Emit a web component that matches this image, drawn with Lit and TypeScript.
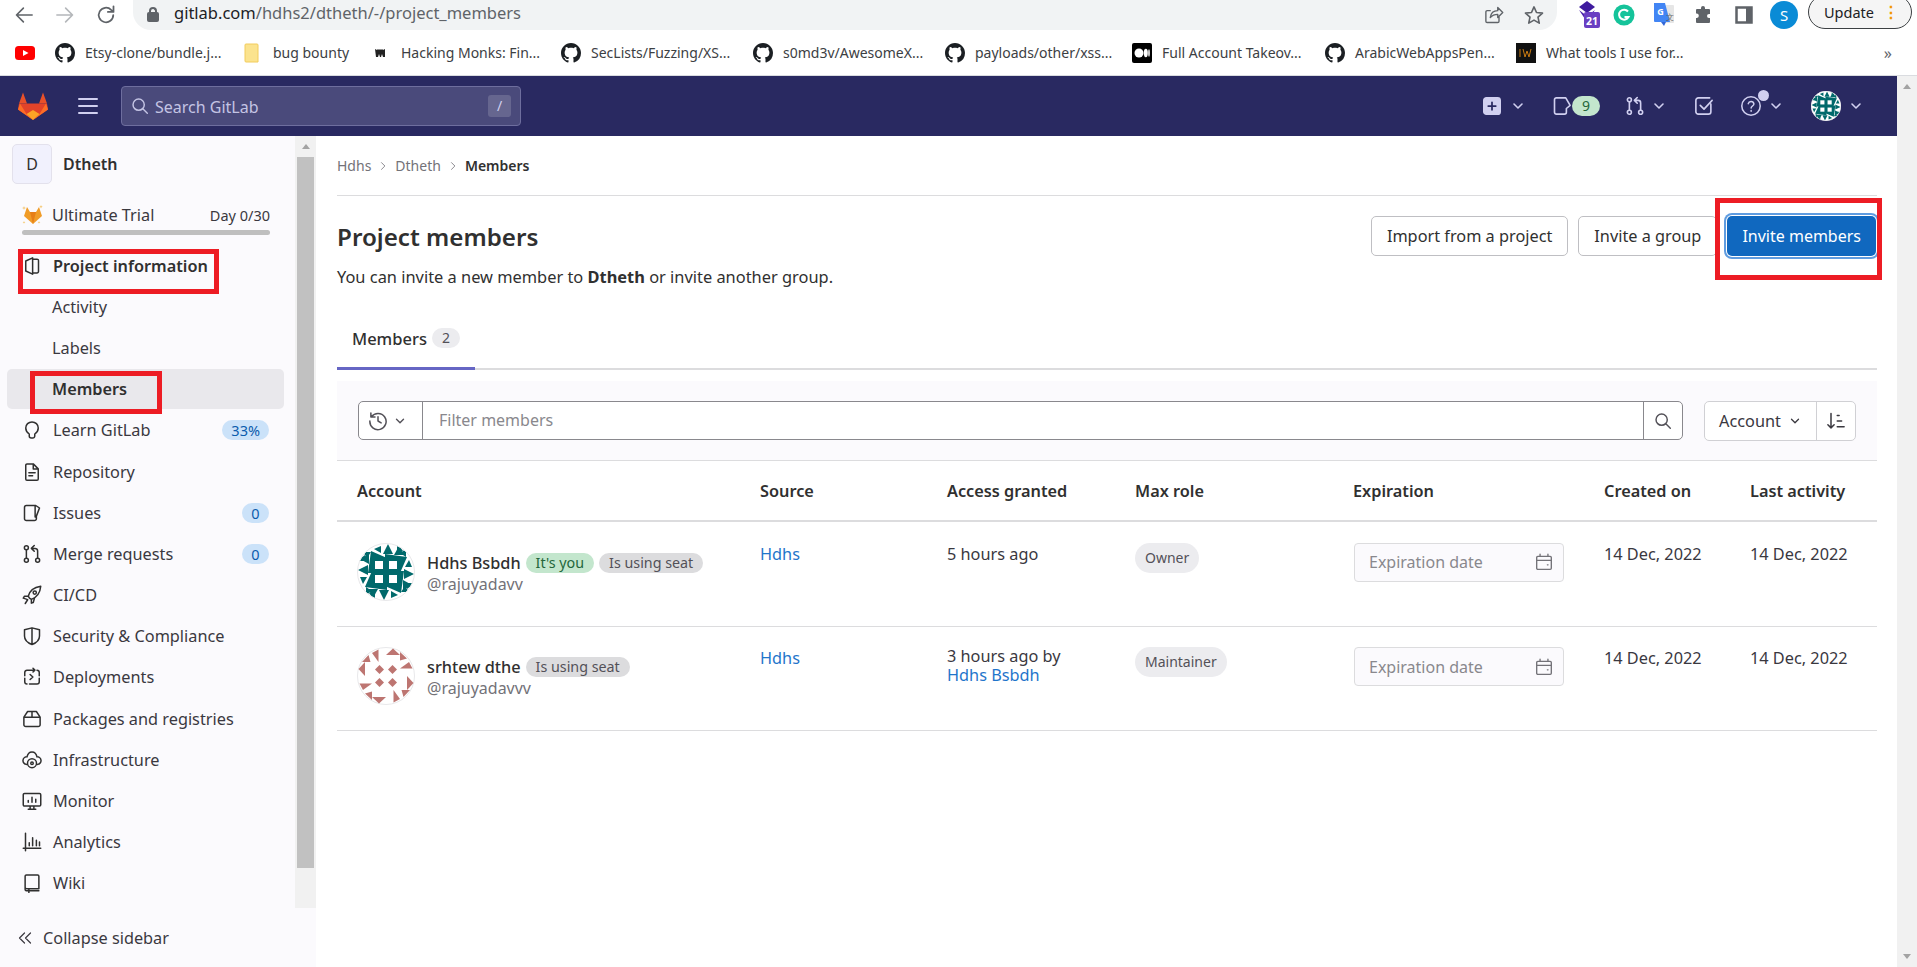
import { LitElement, html, svg, css } from 'lit';
import { customElement } from 'lit/decorators.js';

const GITHUB = 'M8 0C3.58 0 0 3.58 0 8c0 3.54 2.29 6.53 5.47 7.59.4.07.55-.17.55-.38 0-.19-.01-.82-.01-1.49-2.01.37-2.53-.49-2.69-.94-.09-.23-.48-.94-.82-1.13-.28-.15-.68-.52-.01-.53.63-.01 1.08.58 1.23.82.72 1.21 1.87.87 2.33.66.07-.52.28-.87.51-1.07-1.78-.2-3.64-.89-3.64-3.95 0-.87.31-1.59.82-2.15-.08-.2-.36-1.02.08-2.12 0 0 .67-.21 2.2.82.64-.18 1.32-.27 2-.27.68 0 1.36.09 2 .27 1.53-1.04 2.2-.82 2.2-.82.44 1.1.16 1.92.08 2.12.51.56.82 1.27.82 2.15 0 3.07-1.87 3.75-3.65 3.95.29.25.54.73.54 1.48 0 1.07-.01 1.93-.01 2.2 0 .21.15.46.55.38A8.013 8.013 0 0016 8c0-4.42-3.58-8-8-8z';

// stroked glyphs on a 16 box, roughly the GitLab svg set
const ICONS: Record<string, ReturnType<typeof svg>> = {
  project: svg`<path d="M3 4l5.5-2.5v13L3 12zM8.5 2.5H12a1.2 1.2 0 011.2 1.2v8.6a1.2 1.2 0 01-1.2 1.2H8.5"/>`,
  bulb: svg`<path d="M5.8 11.2C4 10 3 8.4 3 6.4 3 3.6 5.2 1.5 8 1.5s5 2.1 5 4.9c0 2-1 3.6-2.8 4.8v1.6a1.6 1.6 0 01-1.6 1.6H7.4a1.6 1.6 0 01-1.6-1.6z"/>`,
  doc: svg`<path d="M3 2.5a1 1 0 011-1h5l4 4v8a1 1 0 01-1 1H4a1 1 0 01-1-1zM9 1.5v4h4M5.5 8.5h5M5.5 11h3"/>`,
  issues: svg`<path d="M3.5 2h7.5l3 2-2.5 6.5v2a1.5 1.5 0 01-1.5 1.5H3.5A1.5 1.5 0 012 12.5v-9A1.5 1.5 0 013.5 2zM10.5 2.2v9"/>`,
  merge: svg`<circle cx="3.5" cy="3" r="1.6"/><circle cx="3.5" cy="13" r="1.6"/><circle cx="12.5" cy="13" r="1.6"/><path d="M3.5 4.6v6.8M12.5 11.4V5.5a2 2 0 00-2-2H8M9.8 1.2L7.5 3.5l2.3 2.3"/>`,
  rocket: svg`<path d="M6 10.5l-1-1.5C6 5 9.5 1.8 15 1c-.5 5.5-3.6 9-7.5 10.5zM5 9H2l-1 1.5 3 1M7.5 11.5v3L9 14l1-3.5M4.5 11.8L2.6 14.8"/><circle cx="10.2" cy="6" r="1.3"/>`,
  shield: svg`<path d="M8 1.5l6 1.5v5c0 3-2.5 5.5-6 6.8C4.5 13.5 2 11 2 8V3zM8 1.5v13.3"/>`,
  deploy: svg`<path d="M10 2.5H4A1.8 1.8 0 002.2 4.3V7M6 13.5h6a1.8 1.8 0 001.8-1.8V9M2.2 9v2.7A1.8 1.8 0 004 13.5M13.8 7V4.3A1.8 1.8 0 0012 2.5M8.8 1l1.5 1.5L8.8 4M6.5 6l2.2 2-2.2 2"/>`,
  box: svg`<path d="M4.5 2h7l3 4.5v6a1.5 1.5 0 01-1.5 1.5H3a1.5 1.5 0 01-1.5-1.5v-6zM1.5 6.5h13M8 2v4.5"/>`,
  infra: svg`<path d="M4 11.5H3.5A3 3 0 01.8 8.2 3 3 0 014 5.5C4.5 3 6 1.5 8 1.5s3.5 1.5 4 4a3 3 0 013.2 2.7 3 3 0 01-2.7 3.3H12"/><circle cx="8" cy="10.5" r="3.6"/><circle cx="8" cy="10.5" r="1"/>`,
  monitor: svg`<path d="M2 2h12a1 1 0 011 1v8a1 1 0 01-1 1H2a1 1 0 01-1-1V3a1 1 0 011-1zM5 14.5h6M6.5 12v2.5M9.5 12v2.5M5 9V7.5M8 9V5M11 9V6.5"/>`,
  analytics: svg`<path d="M2.8 1v14M1 13h14M5.8 11V8.5M8.5 11V4.5M11.5 11V6.5M14 11V8"/>`,
  wiki: svg`<path d="M3.5 1.5h9a1 1 0 011 1v10h-10A1.3 1.3 0 012.5 11.5V2.5a1 1 0 011-1zM2.5 11.5v1.7a1 1 0 001 1h10M5.5 13v2.5"/>`,
  chevrons: svg`<path d="M7.5 3L2.5 8l5 5M13.5 3l-5 5 5 5"/>`,
  chev: svg`<path d="M4 6l4 4 4-4"/>`,
  crumb: svg`<path d="M6 3.5L10.5 8 6 12.5"/>`,
  search: svg`<circle cx="6.8" cy="6.8" r="5"/><path d="M10.5 10.5l4 4"/>`,
  history: svg`<path d="M2.8 4.5A6.5 6.5 0 111.5 8M2.3 1.5v3.3h3.3M8 4.5V8l2.5 1.5"/>`,
  sort: svg`<path d="M4 2v11.5M1.5 11L4 13.5 6.5 11M9 3.5h1.5M9 8h3.5M9 12.5h5.5"/>`,
  calendar: svg`<path d="M2.5 3h11a1 1 0 011 1v9.5a1 1 0 01-1 1h-11a1 1 0 01-1-1V4a1 1 0 011-1zM1.5 6.5h13M4.5 1v2M11.5 1v2M11 10.5h.6"/>`,
  back: svg`<path d="M14.5 8H2M7.5 2.5L2 8l5.5 5.5"/>`,
  fwd: svg`<path d="M1.5 8H14M8.5 2.5L14 8l-5.5 5.5"/>`,
  reload: svg`<path d="M13.8 8a5.8 5.8 0 11-1.7-4.1L14 5.5M14 1v4.5H9.5"/>`,
  share: svg`<path d="M12 9.5V13a1 1 0 01-1 1H2.5a1 1 0 01-1-1V5.5a1 1 0 011-1H5M5 10c.5-3.5 3-5.5 6-5.5V2l4 4-4 4V7.5c-2.5 0-4.5.8-6 2.5z"/>`,
  star: svg`<path d="M8 1.5l2 4.5 4.8.5-3.6 3.2 1 4.8L8 12.1l-4.2 2.4 1-4.8L1.2 6.5 6 6z"/>`,
  plusBox: svg`<rect x="1.5" y="1.5" width="13" height="13" rx="2" fill="currentColor"/><path d="M8 5v6M5 8h6" stroke="#292961"/>`,
  todo: svg`<path d="M13.5 6.5v6a2 2 0 01-2 2h-8a2 2 0 01-2-2v-9a2 2 0 012-2h9M5 7.5L8 10.5l6.5-7"/>`,
  help: svg`<circle cx="8" cy="8" r="6.7"/><path d="M6 6.3A2.1 2.1 0 0110.1 6.5c0 1.4-2 1.6-2 3M8.1 11.3v.6"/>`,
  issueOutline: svg`<path d="M3.5 1.5h7.5l3.5 6-3 2.5v3a1.5 1.5 0 01-1.5 1.5H3.5A1.5 1.5 0 012 13V3a1.5 1.5 0 011.5-1.5z"/>`,
};

const icon = (name: string, size = 20, width = 1.4) => html`<svg class="ic" width=${size} height=${size} viewBox="0 0 16 16" fill="none" stroke="currentColor" stroke-width=${width} stroke-linecap="round" stroke-linejoin="round">${ICONS[name]}</svg>`;

const rot = [0, 90, 180, 270];

const tealAvatar = (size: number) => html`<svg class="avatar" width=${size} height=${size} viewBox="0 0 58 58">
  <defs><clipPath id="c${size}"><circle cx="29" cy="29" r="28.5"/></clipPath></defs>
  <circle cx="29" cy="29" r="29" fill="#fff"/>
  <g clip-path="url(#c${size})" fill="#00696b">
    ${rot.map(r => svg`<g transform="rotate(${r} 29 29)">
      <polygon points="14,8 30,15 30,30 11,30"/>
      <polygon points="24,3 24,10 17,6"/>
      <polygon points="31,1 26,11 36,11"/>
      <polygon points="37,12 42,3 47,12"/>
      <polygon points="6,9 14,9 10,15"/>
      <polygon points="0,18 8,18 8,12"/>
      <rect x="18" y="18" width="8" height="8" fill="#fff"/>
    </g>`)}
  </g>
  <circle cx="29" cy="29" r="28.5" fill="none" stroke="#e8e8ea"/>
</svg>`;

const roseAvatar = (size: number) => html`<svg class="avatar" width=${size} height=${size} viewBox="0 0 58 58">
  <circle cx="29" cy="29" r="29" fill="#fff"/>
  <circle cx="29" cy="29" r="28.5" fill="none" stroke="#e8e8ea"/>
  ${rot.map(r => svg`<g transform="rotate(${r} 29 29)" fill="#bd7571">
    <polygon points="5,15 11.5,8 13.5,15"/>
    <polygon points="15,6 21.5,2.5 21.5,15"/>
    <polygon points="1.5,22 8,15 8,29"/>
    <polygon points="22.5,18 27,22.5 22.5,27 18,22.5"/>
  </g>`)}
</svg>`;

const tanuki = html`<svg width="32" height="32" viewBox="0 0 32 32">
  <polygon points="6,2.5 10,13.5 2,13.5" fill="#e8502a"/>
  <polygon points="26,2.5 22,13.5 30,13.5" fill="#e8502a"/>
  <polygon points="2,13.5 30,13.5 31,19.5 16,30 1,19.5" fill="#e24329"/>
  <polygon points="1,19.5 3,13.5 9.5,24 16,30" fill="#fc6d26"/>
  <polygon points="31,19.5 29,13.5 22.5,24 16,30" fill="#fc6d26"/>
  <polygon points="9.5,24 16,20 22.5,24 16,30" fill="#fca326"/>
</svg>`;

const trialTanuki = html`<svg width="22" height="22" viewBox="0 0 22 22">
  <polygon points="5,3 8,8 14,8 17,3 20,12 11,20 2,12" fill="#f09c28"/>
  <polygon points="8,8 14,8 11,20" fill="#e67e17"/>
  <path d="M2 2l.5 1.5L4 4l-1.5.5L2 6l-.5-1.500L0 4l1.500-.5zM19 1l.5 1.200 1.200.5-1.200.5-.5 1.300-.5-1.300-1.200-.5 1.200-.5zM2 17l.4 1 1 .4-1 .4-.4 1-.4-1-1-.4 1-.4zM17 17l.4 1 1 .4-1 .4-.4 1-.4-1-1-.4 1-.4z" fill="#f4c468"/>
</svg>`;

interface Mark { type: string; text: string; width: number }

const BOOKMARKS: Mark[] = [
  { type: 'yt', text: '', width: 0 },
  { type: 'gh', text: 'Etsy-clone/bundle.j...', width: 138 },
  { type: 'folder', text: 'bug bounty', width: 78 },
  { type: 'hm', text: 'Hacking Monks: Fin...', width: 140 },
  { type: 'gh', text: 'SecLists/Fuzzing/XS...', width: 142 },
  { type: 'gh', text: 's0md3v/AwesomeX...', width: 142 },
  { type: 'gh', text: 'payloads/other/xss...', width: 137 },
  { type: 'md', text: 'Full Account Takeov...', width: 143 },
  { type: 'gh', text: 'ArabicWebAppsPen...', width: 141 },
  { type: 'iw', text: 'What tools I use for...', width: 142 },
];

interface NavItem { icon: string; label: string; count?: string; bold?: boolean; sub?: boolean; active?: boolean; mark?: string }

const NAV: NavItem[] = [
  { icon: 'project', label: 'Project information', bold: true, mark: 'mark-info' },
  { icon: '', label: 'Activity', sub: true },
  { icon: '', label: 'Labels', sub: true },
  { icon: '', label: 'Members', sub: true, bold: true, active: true, mark: 'mark-members' },
  { icon: 'bulb', label: 'Learn GitLab', count: '33%' },
  { icon: 'doc', label: 'Repository' },
  { icon: 'issues', label: 'Issues', count: '0' },
  { icon: 'merge', label: 'Merge requests', count: '0' },
  { icon: 'rocket', label: 'CI/CD' },
  { icon: 'shield', label: 'Security & Compliance' },
  { icon: 'deploy', label: 'Deployments' },
  { icon: 'box', label: 'Packages and registries' },
  { icon: 'infra', label: 'Infrastructure' },
  { icon: 'monitor', label: 'Monitor' },
  { icon: 'analytics', label: 'Analytics' },
  { icon: 'wiki', label: 'Wiki' },
];

const COLUMNS = ['Account', 'Source', 'Access granted', 'Max role', 'Expiration', 'Created on', 'Last activity'];

@customElement('app-root')
export class AppRoot extends LitElement {
  static styles = css`
    :host {
      display: block;
      position: relative;
      width: 1917px;
      height: 967px;
      overflow: hidden;
      background: #fff;
      font-family: "Noto Sans", "Open Sans", sans-serif;
      font-size: 16.3px;
      color: #303030;
    }
    .ic { display: block; flex: none; }
    a { color: #1f75cb; text-decoration: none; }

    .toolbar { display: flex; align-items: center; height: 30px; padding-left: 14px; gap: 21px; color: #5f6368; overflow: hidden; }
    .toolbar .off { color: #b4b7ba; }
    .omnibox { display: flex; align-items: center; flex: none; width: 1424px; height: 30px; margin-left: -4px; padding: 0 12px 0 14px; box-sizing: border-box; background: #f1f3f4; border-radius: 0 0 18px 18px; gap: 8px; }
    .lock { width: 12px; height: 10px; margin-top: 4px; background: #5f6368; border-radius: 2px; position: relative; flex: none; }
    .lock::before { content: ""; position: absolute; left: 2px; top: -5px; width: 4px; height: 5px; border: 2px solid #5f6368; border-bottom: 0; border-radius: 4px 4px 0 0; }
    .url { font-size: 16.5px; color: #5f6368; white-space: nowrap; margin: -5px 0 0 7px; }
    .url b { font-weight: 400; color: #202124; }
    .omni-end { margin-left: auto; display: flex; gap: 20px; margin-right: 1px; }
    .exts { display: flex; align-items: center; gap: 16px; margin-left: -22px; }
    .ext { width: 24px; height: 24px; display: flex; align-items: center; justify-content: center; }
    .ext.first { margin-right: -4px; }
    .me { width: 28px; height: 28px; border-radius: 50%; background: #0a8bd6; color: #fff; font-size: 15px; display: flex; align-items: center; justify-content: center; margin-left: -2px; }
    .update { display: flex; align-items: center; justify-content: space-between; flex: none; width: 104px; height: 34px; margin: -6px 0 0 -6px; padding: 0 12px 0 15px; box-sizing: border-box; border: 1px solid #3c4043; border-radius: 17px; font-size: 14.5px; color: #202124; background: #f5f5f5; }
    .dots { color: #f29900; font-weight: 700; font-size: 16px; line-height: 1; }

    .bookmarks { display: flex; align-items: center; height: 46px; padding-left: 15px; gap: 20px; border-bottom: 1px solid #dadce0; box-sizing: border-box; position: relative; }
    .bm { display: flex; align-items: center; gap: 10px; font-size: 14px; color: #3c4043; white-space: nowrap; }
    .bm span { display: block; }
    .more { position: absolute; right: 25px; top: 12px; font-size: 16px; color: #5f6368; }
    .fav { display: block; flex: none; width: 20px; height: 20px; }

    .navbar { display: flex; align-items: center; height: 60px; margin-right: 20px; background: #292961; color: #d1d0f0; padding-left: 17px; }
    .hamburger { margin-left: 29px; width: 20px; display: flex; flex-direction: column; gap: 5px; }
    .hamburger i { display: block; height: 2px; background: #d1d0f0; border-radius: 1px; }
    .search { display: flex; align-items: center; width: 400px; height: 40px; margin-left: 23px; box-sizing: border-box; border: 1px solid #6e6e9e; border-radius: 4px; background: #4a4a7b; color: #c4c4e4; padding: 0 9px; gap: 6px; font-size: 16px; }
    .search > span:nth-of-type(1) { padding-top: 2px; }
    .slash { margin-left: auto; width: 23px; height: 22px; border-radius: 3px; background: #66668f; color: #d1d0f0; font-size: 14px; text-align: center; line-height: 22px; }
    .nav-end { margin-left: auto; display: flex; align-items: center; margin-right: 33px; }
    .chev { margin-left: 8px; }
    .chev.m6 { margin-left: 6px; }
    .chev.m7 { margin-left: 7px; }
    .s25 { width: 25px; }
    .s26 { width: 26px; }
    .s27 { width: 27px; }
    .pill { width: 28px; height: 20px; border-radius: 10px; background: #c3e6cd; color: #24663b; font-size: 14px; text-align: center; line-height: 20px; }
    .help { position: relative; }
    .help i { position: absolute; right: -7px; top: -5px; width: 11px; height: 11px; border-radius: 50%; background: #d1d0f0; }

    .body { display: flex; height: 831px; }
    .sidebar { flex: none; width: 316px; display: flex; flex-direction: column; background: #fbfafd; }
    .side-main { display: flex; height: 772px; }
    .side-nav { flex: 1; min-width: 0; }
    .side-bar { width: 21px; flex: none; background: #f1f1f1; display: flex; flex-direction: column; align-items: center; }
    .arrow-up { width: 0; height: 0; border: 4.5px solid transparent; border-top: 0; border-bottom: 5px solid #a3a3a3; margin: 8px 0; }
    .arrow-down { width: 0; height: 0; border: 4.5px solid transparent; border-bottom: 0; border-top: 5px solid #a3a3a3; margin: 0 0 8px; }
    .thumb { width: 17px; height: 711px; background: #c1c1c1; }
    .ctx { display: flex; align-items: center; gap: 11px; padding: 8px 12px 0; font-size: 16px; font-weight: 600; color: #303030; }
    .tile { width: 40px; height: 40px; box-sizing: border-box; border: 1px solid #e3e1ec; border-radius: 5px; background: #f1f1fd; font-weight: 400; display: flex; align-items: center; justify-content: center; font-size: 16px; color: #303030; }
    .trial { margin: 0 22px; height: 52px; padding-top: 20px; box-sizing: border-box; width: 248px; }
    .trial-row { display: flex; align-items: center; height: 22px; color: #3a383f; gap: 8px; }
    .trial-row small { margin-left: auto; font-size: 14.5px; }
    .trial-bar { height: 5px; border-radius: 3px; background: #bfbfbf; margin-top: 4px; }
    .items { display: flex; flex-direction: column; padding-top: 9px; }
    .item { position: relative; display: flex; align-items: center; height: 41.2px; gap: 11px; margin: 0 11px 0 7px; padding: 0 15px; box-sizing: border-box; color: #3a383f; white-space: nowrap; }
    .item .ic { color: #303030; }
    .item.sub { padding-left: 45px; }
    .item.bold { font-weight: 600; color: #303030; }
    .item.active::before { content: ""; position: absolute; left: 0; right: 0; top: .6px; height: 40px; background: #e9e8ec; border-radius: 5px; }
    .item > * { position: relative; }
    .count { margin-left: auto; min-width: 27px; height: 20px; padding: 0 9px; box-sizing: border-box; border-radius: 10px; background: #cbe2f9; color: #0b5cad; font-size: 14.5px; line-height: 20px; text-align: center; }
    .mark { position: absolute !important; border: 5px solid #ed1c24; box-sizing: border-box; pointer-events: none; }
    .mark-info { left: 11px; top: 4px; width: 201px; height: 45px; }
    .mark-members { left: 23px; top: 2px; width: 132px; height: 43px; }
    .collapse { flex: 1; display: flex; align-items: center; gap: 10px; padding-left: 17px; color: #3a383f; }

    .main { flex: none; width: 1540px; padding: 0 20px 0 21px; }
    .crumbs { display: flex; align-items: center; height: 60px; box-sizing: border-box; border-bottom: 1px solid #dcdcde; font-size: 14px; color: #737278; gap: 6px; }
    .crumbs b { font-weight: 600; color: #303030; }
    .head { display: flex; justify-content: space-between; height: 62px; padding-top: 20px; box-sizing: border-box; }
    h1 { margin: 0; font-size: 24.2px; font-weight: 600; line-height: 42px; color: #303030; }
    .actions { display: flex; gap: 10px; padding-right: 1px; position: relative; }
    .btn { height: 40px; box-sizing: border-box; border: 1px solid #bfbfc3; border-radius: 5px; padding: 0 15px; background: #fff; font: inherit; color: #303030; display: flex; align-items: center; white-space: nowrap; }
    .btn.primary { border: 0; background: #1068bf; color: #fff; font-size: 16px; box-shadow: 0 0 0 1px #fff, 0 0 0 3px #5f9ce0; }
    .mark-invite { right: -5px; top: -18px; width: 167px; height: 82px; }
    .desc { margin: 0; height: 56px; line-height: 30px; padding-top: 4px; box-sizing: border-box; color: #303030; font-size: 16.4px; }
    .desc b { font-weight: 700; }
    .tabs { height: 56px; border-bottom: 2px solid #dcdcde; box-sizing: border-box; }
    .tab { display: flex; align-items: center; width: 138px; height: 56px; padding: 0 0 5px 15px; box-sizing: border-box; border-bottom: 3px solid #6666c4; gap: 5px; color: #303030; font-size: 16.5px; font-weight: 500; }
    .tab-n { width: 28px; height: 20px; border-radius: 10px; background: #ececef; color: #535158; font-size: 14px; font-weight: 400; line-height: 20px; text-align: center; }
    .filters { display: flex; align-items: center; height: 80px; margin-top: 11px; padding: 0 21px; box-sizing: border-box; background: #fbfafd; border-bottom: 1px solid #dcdcde; gap: 21px; }
    .filter { flex: 1; display: flex; height: 39px; box-sizing: border-box; border: 1px solid #89888d; border-radius: 5px; background: #fff; color: #89888d; }
    .f-hist { display: flex; align-items: center; width: 64px; flex: none; padding-left: 9px; gap: 5px; border-right: 1px solid #89888d; color: #535158; box-sizing: border-box; }
    .f-text { flex: 1; padding-left: 16px; line-height: 37px; font-size: 16px; }
    .f-go { width: 38px; flex: none; border-left: 1px solid #89888d; display: flex; align-items: center; justify-content: center; color: #535158; }
    .sortgrp { display: flex; height: 40px; box-sizing: border-box; border: 1px solid #d0d0d4; border-radius: 5px; background: #fff; color: #3a383f; }
    .s-key { display: flex; align-items: center; width: 112px; padding-left: 14px; gap: 7px; border-right: 1px solid #d0d0d4; box-sizing: border-box; }
    .s-dir { width: 38px; display: flex; align-items: center; justify-content: center; }

    .table { display: grid; grid-template-columns: 423px 187px 188px 218px 251px 146px 1fr; }
    .th { height: 61px; line-height: 61px; border-bottom: 2px solid #dcdcde; box-sizing: border-box; font-weight: 600; color: #303030; white-space: nowrap; }
    .td { height: 104.5px; box-sizing: border-box; border-bottom: 1px solid #dcdcde; padding-top: 20.7px; line-height: 22px; color: #3a383f; }
    .first { padding-left: 20px; }
    .tight { line-height: 19px; }
    .who { display: flex; gap: 12px; }
    .avatar { display: block; flex: none; }
    .who-text { padding-top: 10px; line-height: 20px; }
    .who-line { display: flex; align-items: center; gap: 5px; height: 20px; font-weight: 500; color: #303030; white-space: nowrap; }
    .user { color: #737278; margin-top: 1px; font-size: 16px; }
    .tag { height: 20px; line-height: 20px; padding: 0 10px; border-radius: 10px; font-size: 14.3px; font-weight: 400; background: #dcdcde; color: #535158; }
    .tag.you { background: #c3e6cd; color: #24663b; }
    .role { display: inline-block; height: 30px; line-height: 30px; padding: 0 10px; border-radius: 15px; background: #ececef; color: #535158; font-size: 14px; }
    .date { display: flex; align-items: center; justify-content: space-between; width: 210px; height: 39px; margin-left: 1px; padding: 0 10px 0 14px; box-sizing: border-box; border: 1px solid #dcdcde; border-radius: 4px; background: #fbfafd; color: #89888d; font-size: 16px; }
    .date .ic { color: #737278; }

    .rail { position: absolute; right: 0; top: 76px; width: 20px; height: 891px; background: #f1f1f1; display: flex; flex-direction: column; align-items: center; justify-content: space-between; }
  `;

  renderFav(type: string) {
    switch (type) {
      case 'gh': return html`<svg class="fav" viewBox="0 0 16 16"><path d=${GITHUB} fill="#1b1f23"/></svg>`;
      case 'yt': return html`<svg class="fav" viewBox="0 0 20 20"><rect y="3" width="20" height="14" rx="3.5" fill="#f00"/><polygon points="8,7 13.5,10 8,13" fill="#fff"/></svg>`;
      case 'folder': return html`<svg class="fav" viewBox="0 0 20 20"><path d="M3 1h11a1 1 0 011 1v17H3a1 1 0 01-1-1V2a1 1 0 011-1z" fill="#fbe38e" stroke="#f2cc5c"/></svg>`;
      case 'hm': return html`<svg class="fav" viewBox="0 0 20 20"><path d="M4 6l2 1 1-1 1 1 1-1 1 1 1-1 1 1 2-1v8h-2l-1-3-1 3H9L8 11l-1 3H5z" fill="#222"/></svg>`;
      case 'md': return html`<svg class="fav" viewBox="0 0 20 20"><rect width="20" height="20" rx="2" fill="#000"/><ellipse cx="7" cy="10" rx="4.5" ry="4.5" fill="#fff"/><ellipse cx="13.8" cy="10" rx="2" ry="4.2" fill="#fff"/><ellipse cx="17" cy="10" rx=".8" ry="3.8" fill="#fff"/></svg>`;
      default: return html`<svg class="fav" viewBox="0 0 20 20"><rect width="20" height="20" fill="#111"/><path d="M4 6v8" stroke="#c87a12"/><path d="M7 6l2 8 2-6 2 6 2-8" stroke="#c87a12" fill="none"/></svg>`;
    }
  }

  renderToolbar() {
    return html`<div class="toolbar">
      ${icon('back', 20, 1.3)}
      <span class="off">${icon('fwd', 20, 1.3)}</span>
      ${icon('reload', 20, 1.4)}
      <div class="omnibox">
        <i class="lock"></i>
        <span class="url"><b>gitlab.com</b>/hdhs2/dtheth/-/project_members</span>
        <div class="omni-end">${icon('share', 20, 1.1)}${icon('star', 20, 1.3)}</div>
      </div>
      <div class="exts">
        <div class="ext first"><svg width="24" height="30" viewBox="0 0 24 30"><polygon points="11,1 19,7 11,13 3,7" fill="#3f1b9e"/><polygon points="3,10 11,16 19,10 11,22" fill="#4a23ab"/><rect x="8" y="12" width="16" height="16" rx="2" fill="#6a3fc2"/><text x="16" y="25" font-size="10.5" font-weight="700" text-anchor="middle" fill="#fff">21</text></svg></div>
        <div class="ext"><svg width="22" height="22" viewBox="0 0 22 22"><circle cx="11" cy="11" r="10.5" fill="#15c39a"/><path d="M15 7.5A5 5 0 1015.5 13h-4" fill="none" stroke="#fff" stroke-width="2"/></svg></div>
        <div class="ext"><svg width="24" height="26" viewBox="0 0 24 26"><path d="M10 3h11a1 1 0 011 1v16a1 1 0 01-1 1h-8z" fill="#e6e6e6"/><path d="M2 1h11l5 19H3a1 1 0 01-1-1z" fill="#4285f4"/><path d="M9 20l3 4 2-4z" fill="#3367d6"/><text x="8.5" y="13" font-size="9" font-weight="700" text-anchor="middle" fill="#fff">G</text><text x="17.5" y="18" font-size="8" text-anchor="middle" fill="#666">文</text></svg></div>
        <div class="ext"><svg width="20" height="20" viewBox="0 0 20 20"><path d="M7 3a2 2 0 014 0v1h4a1 1 0 011 1v4h-1a2 2 0 000 4h1v4a1 1 0 01-1 1H3a1 1 0 01-1-1v-4h1a2.3 2.3 0 000-4.5H2V5a1 1 0 011-1h4z" fill="#5f6368"/></svg></div>
        <div class="ext"><svg width="18" height="18" viewBox="0 0 18 18"><rect x="1.5" y="1.5" width="15" height="15" fill="none" stroke="#5f6368" stroke-width="2.5"/><rect x="11" y="1.5" width="5.5" height="15" fill="#5f6368"/></svg></div>
        <div class="me">S</div>
        <div class="update">Update<span class="dots">⋮</span></div>
      </div>
    </div>`;
  }

  renderBookmarks() {
    return html`<div class="bookmarks">
      ${BOOKMARKS.map(b => html`<div class="bm">${this.renderFav(b.type)}${b.text ? html`<span style="width:${b.width}px">${b.text}</span>` : ''}</div>`)}
      <span class="more">»</span>
    </div>`;
  }

  renderNavbar() {
    return html`<div class="navbar">
      ${tanuki}
      <div class="hamburger"><i></i><i></i><i></i></div>
      <div class="search">${icon('search', 18, 1.3)}<span>Search GitLab</span><span class="slash">/</span></div>
      <div class="nav-end">
        ${icon('plusBox', 20)}<span class="chev">${icon('chev', 16, 1.6)}</span>
        <span class="s26"></span>
        ${icon('issueOutline', 20, 1.3)}<span class="pill">9</span>
        <span class="s25"></span>
        ${icon('merge', 20, 1.3)}<span class="chev m6">${icon('chev', 16, 1.6)}</span>
        <span class="s27"></span>
        ${icon('todo', 20, 1.3)}
        <span class="s26"></span>
        <span class="help">${icon('help', 22, 1.1)}<i></i></span><span class="chev m6">${icon('chev', 16, 1.6)}</span>
        <span class="s27"></span>
        ${tealAvatar(30)}<span class="chev m7">${icon('chev', 16, 1.6)}</span>
      </div>
    </div>`;
  }

  renderSidebar() {
    return html`<aside class="sidebar">
      <div class="side-main">
        <div class="side-nav">
          <div class="ctx"><span class="tile">D</span>Dtheth</div>
          <div class="trial">
            <div class="trial-row">${trialTanuki}<span>Ultimate Trial</span><small>Day 0/30</small></div>
            <div class="trial-bar"></div>
          </div>
          <div class="items">
            ${NAV.map(n => html`<div class="item ${n.sub ? 'sub' : ''} ${n.bold ? 'bold' : ''} ${n.active ? 'active' : ''}">
              ${n.icon ? icon(n.icon, 20, 1.2) : ''}
              <span>${n.label}</span>
              ${n.count ? html`<span class="count">${n.count}</span>` : ''}
              ${n.mark ? html`<i class="mark ${n.mark}"></i>` : ''}
            </div>`)}
          </div>
        </div>
        <div class="side-bar"><i class="arrow-up"></i><div class="thumb"></div></div>
      </div>
      <div class="collapse">${icon('chevrons', 16, 1.2)}<span>Collapse sidebar</span></div>
    </aside>`;
  }

  renderRows() {
    return html`
      <div class="td first"><div class="who">${tealAvatar(58)}<div class="who-text">
        <div class="who-line">Hdhs Bsbdh <span class="tag you">It's you</span><span class="tag">Is using seat</span></div>
        <div class="user">@rajuyadavv</div></div></div></div>
      <div class="td"><a>Hdhs</a></div>
      <div class="td">5 hours ago</div>
      <div class="td"><span class="role">Owner</span></div>
      <div class="td"><div class="date">Expiration date ${icon('calendar', 18, 1.2)}</div></div>
      <div class="td">14 Dec, 2022</div>
      <div class="td">14 Dec, 2022</div>

      <div class="td first"><div class="who">${roseAvatar(58)}<div class="who-text">
        <div class="who-line">srhtew dthe <span class="tag">Is using seat</span></div>
        <div class="user">@rajuyadavvv</div></div></div></div>
      <div class="td"><a>Hdhs</a></div>
      <div class="td tight">3 hours ago by<br /><a>Hdhs Bsbdh</a></div>
      <div class="td"><span class="role">Maintainer</span></div>
      <div class="td"><div class="date">Expiration date ${icon('calendar', 18, 1.2)}</div></div>
      <div class="td">14 Dec, 2022</div>
      <div class="td">14 Dec, 2022</div>
    `;
  }

  render() {
    return html`
      ${this.renderToolbar()}
      ${this.renderBookmarks()}
      ${this.renderNavbar()}
      <div class="rail"><i class="arrow-up"></i><i class="arrow-down"></i></div>
      <div class="body">
        ${this.renderSidebar()}
        <main class="main">
          <div class="crumbs"><span>Hdhs</span>${icon('crumb', 12, 1.1)}<span>Dtheth</span>${icon('crumb', 12, 1.1)}<b>Members</b></div>
          <div class="head">
            <h1>Project members</h1>
            <div class="actions">
              <button class="btn">Import from a project</button>
              <button class="btn">Invite a group</button>
              <button class="btn primary">Invite members</button>
              <i class="mark mark-invite"></i>
            </div>
          </div>
          <p class="desc">You can invite a new member to <b>Dtheth</b> or invite another group.</p>
          <div class="tabs"><div class="tab">Members <span class="tab-n">2</span></div></div>
          <div class="filters">
            <div class="filter">
              <div class="f-hist">${icon('history', 20, 1.2)}${icon('chev', 14, 1.6)}</div>
              <div class="f-text">Filter members</div>
              <div class="f-go">${icon('search', 18, 1.3)}</div>
            </div>
            <div class="sortgrp">
              <div class="s-key">Account ${icon('chev', 14, 1.5)}</div>
              <div class="s-dir">${icon('sort', 20, 1.2)}</div>
            </div>
          </div>
          <div class="table">
            ${COLUMNS.map((c, i) => html`<div class="th ${i === 0 ? 'first' : ''}">${c}</div>`)}
            ${this.renderRows()}
          </div>
        </main>
      </div>
    `;
  }
}
